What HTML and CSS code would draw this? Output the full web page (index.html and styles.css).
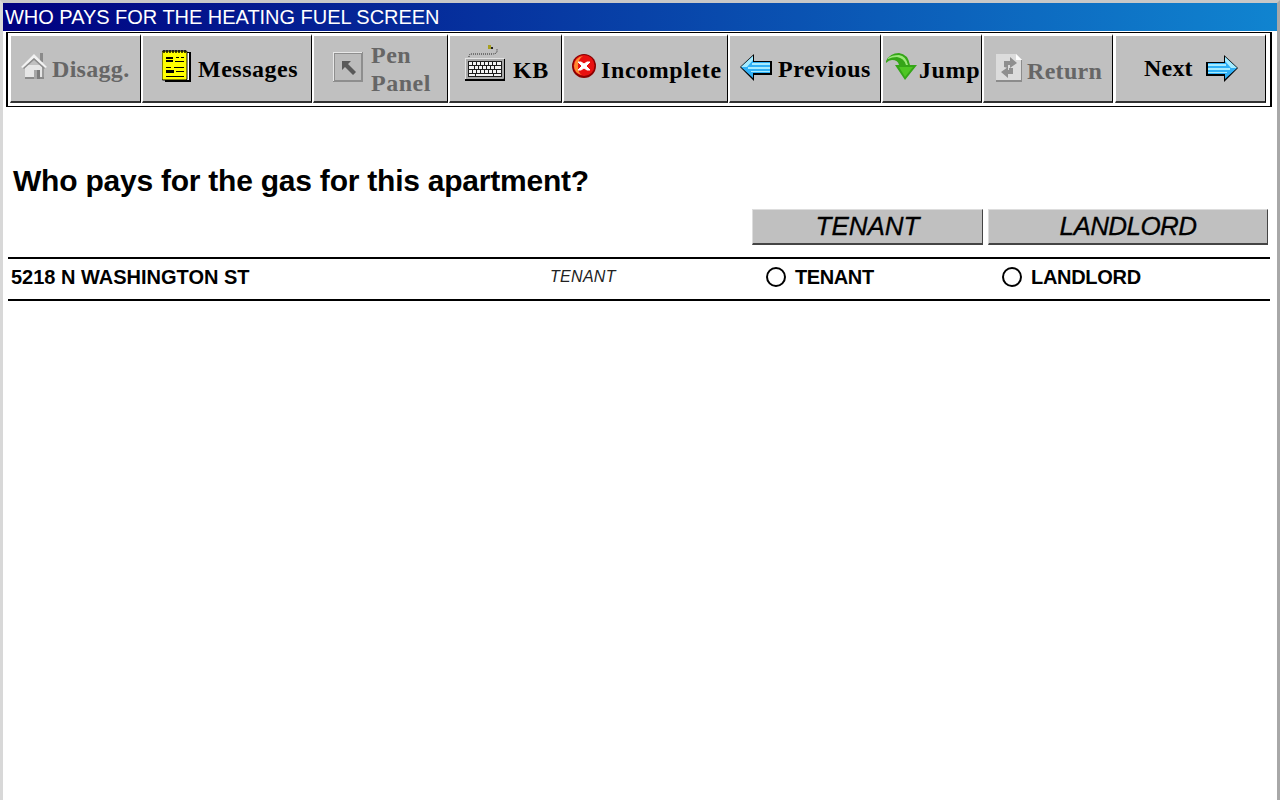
FILE: index.html
```html
<!DOCTYPE html>
<html lang="en">
<head>
<meta charset="utf-8">
<title>Who pays for the heating fuel screen</title>
<link rel="stylesheet" href="styles.css">
</head>
<body>
<div class="window">
  <header class="titlebar">WHO PAYS FOR THE HEATING FUEL SCREEN</header>
  <nav class="toolbar">
    <div class="btn b-disagg off">
      <svg class="ico" width="27" height="28" viewBox="0 0 27 28">
        <rect x="19" y="1" width="3" height="9" fill="#8a8a8a"/>
        <path d="M4 13h19v14H4z" fill="#e6e6e6"/>
        <path d="M21 13h2v14h-2z" fill="#9a9a9a"/>
        <path d="M4 25h19v2H4z" fill="#8a8a8a"/>
        <path d="M0 15 13 2l13 13-2 1L13 6 2 16z" fill="#f2f2f2"/>
        <path d="M2 16 13 6l11 10-1 1L13 8 3 17z" fill="#8c8c8c"/>
        <rect x="13" y="18" width="6" height="9" fill="#7c7c7c"/>
        <rect x="13" y="18" width="3" height="9" fill="#a6a6a6"/>
      </svg>
      <span>Disagg.</span>
    </div>
    <div class="btn b-msg">
      <svg class="ico" width="29" height="32" viewBox="0 0 29 32">
        <rect x="3" y="2" width="26" height="30" fill="#000"/>
        <rect x="25" y="3" width="2" height="27" fill="#fff"/>
        <rect x="0" y="1" width="25" height="29" rx="1" fill="#ffff00" stroke="#000"/>
        <path d="M2 0v3M5 0v3M8 0v3M11 0v3M14 0v3M17 0v3M20 0v3M23 0v3" stroke="#000" stroke-width="1.4"/>
        <path d="M4 7h7v2H4zM14 7h3v1h-3zM19 7h3v1h-3zM4 10h7v2H4zM13 11h9v1h-9zM4 17h5v1H4zM12 17h10v1H12zM4 20h8v3H4zM14 21h8v1H14zM4 26h18v1H4z" fill="#000"/>
      </svg>
      <span>Messages</span>
    </div>
    <div class="btn b-pen off">
      <svg class="ico" width="30" height="30" viewBox="0 0 30 30">
        <rect x="0" y="0" width="30" height="30" fill="#8e8e8e"/>
        <path d="M0 0h29v1H1v28H0z" fill="#e8e8e8"/>
        <rect x="2" y="2" width="26" height="26" fill="#bcbcbc"/>
        <path d="M9 9h9l-3 3 8 8-3 3-8-8-3 3z" fill="#595959"/>
      </svg>
      <span class="stack"><span>Pen</span><span>Panel</span></span>
    </div>
    <div class="btn b-kb">
      <svg class="ico" width="40" height="36" viewBox="0 0 40 36">
        <path d="M4 14v-3q0-2 3-2h20q5 0 5-3V4" fill="none" stroke="#222" stroke-dasharray="1 1"/>
        <rect x="23" y="0" width="3" height="4" fill="#a8a020"/>
        <rect x="26" y="2" width="2" height="2" fill="#222"/>
        <rect x="0" y="14" width="40" height="22" fill="#000"/>
        <rect x="0" y="13" width="39" height="21" rx="1" fill="#a8a8a8"/>
        <path d="M0 13h39v1H1v20H0z" fill="#e4e4e4"/>
        <rect x="3" y="16" width="34" height="16" fill="#1c1c1c"/>
        <path d="M4 17h3v3H4zM8 17h3v3H8zM12 17h3v3h-3zM16 17h3v3h-3zM20 17h3v3h-3zM24 17h3v3h-3zM28 17h3v3h-3zM32 17h4v3h-4zM4 21h5v3H4zM10 21h3v3h-3zM14 21h3v3h-3zM18 21h3v3h-3zM22 21h3v3h-3zM26 21h3v3h-3zM30 21h6v3h-6zM4 25h3v3H4zM8 25h3v3H8zM12 25h3v3h-3zM16 25h3v3h-3zM20 25h3v3h-3zM24 25h3v3h-3zM28 25h3v3h-3zM32 25h4v3h-4zM4 29h6v2H4zM11 29h17v2H11zM29 29h7v2h-7z" fill="#f2f2f2"/>
      </svg>
      <span>KB</span>
    </div>
    <div class="btn b-inc">
      <svg class="ico" width="24" height="24" viewBox="0 0 24 24">
        <circle cx="12" cy="12" r="12" fill="#8a0000"/>
        <circle cx="12" cy="11.5" r="10.5" fill="#e81010"/>
        <path d="M2 12a10 10 0 0 1 9-10q-5 3-5 10t4 9q-8-2-8-9z" fill="#ff8a30"/>
        <path d="M6 8h3l3 2 3-2h3l-4 4 4 4h-3l-3-2-3 2H6l4-4z" fill="#fff" stroke="#fff"/>
      </svg>
      <span>Incomplete</span>
    </div>
    <div class="btn b-prev">
      <svg class="ico" width="32" height="27" viewBox="0 0 32 27">
        <path d="M14 0 0 13l14 14v-6h18V7H14z" fill="#000"/>
        <path d="M13 2 1 13l12 11v-5h17V8H13z" fill="#2fb0f6"/>
        <path d="M13 2 1 13h6l6-7zM12 9h18v2H12zM8 13h22v2H8zM11 17h19v1H11z" fill="#a6ecff"/>
      </svg>
      <span>Previous</span>
    </div>
    <div class="btn b-jump">
      <svg class="ico" width="31" height="28" viewBox="0 0 31 28">
        <path d="M0 9Q4 1 13 1q9 1 11 12h7L19 28 9 13h4q-1-5-7-5-3 0-6 3z" fill="#35a518"/>
        <path d="M2 6q4-3 11-3 7 1 9 10h-2q-2-7-9-8-5 0-9 2z" fill="#9ce97a"/>
        <path d="M13 15h14l-8 10z" fill="#4fc624"/>
      </svg>
      <span>Jump</span>
    </div>
    <div class="btn b-ret off">
      <svg class="ico" width="26" height="29" viewBox="0 0 26 29">
        <path d="M0 1h20l6 6v22H0z" fill="#dcdcdc"/>
        <path d="M20 1l6 6h-6z" fill="#fff"/>
        <path d="M0 27h26v2H0zM25 7h1v22h-1z" fill="#8c8c8c"/>
        <path d="M8 14V8h6V4l7 6-7 5v-3h-2v3zM17 15v6h-5v4l-7-6 7-5v3h1v-2z" fill="#8f8f8f"/>
      </svg>
      <span>Return</span>
    </div>
    <div class="btn b-next">
      <span>Next</span>
      <svg class="ico" width="32" height="27" viewBox="0 0 32 27">
        <path d="M18 0 32 13 18 27v-6H0V7h18z" fill="#000"/>
        <path d="M19 2l12 11-12 11v-5H2V8h17z" fill="#2fb0f6"/>
        <path d="M19 2l12 11h-6l-6-7zM2 9h18v2H2zM2 13h22v2H2zM2 17h19v1H2z" fill="#a6ecff"/>
      </svg>
    </div>
  </nav>
  <main class="content">
    <h1 class="question">Who pays for the gas for this apartment?</h1>
    <div class="heads">
      <div class="head head-tenant">TENANT</div>
      <div class="head head-landlord">LANDLORD</div>
    </div>
    <div class="row">
      <div class="addr">5218 N WASHINGTON ST</div>
      <div class="prev">TENANT</div>
      <div class="opt opt-tenant"><span class="radio"></span>TENANT</div>
      <div class="opt opt-landlord"><span class="radio"></span>LANDLORD</div>
    </div>
  </main>
</div>
</body>
</html>
```
FILE: styles.css
```css
* { box-sizing: border-box; }
html, body { margin: 0; padding: 0; background: #fff; }
body { width: 1280px; height: 800px; overflow: hidden; }

.window {
  height: 800px;
  border-top: 3px solid #c8c8c8;
  border-left: 3px solid #d8d8d8;
  border-right: 3px solid #a8a8a8;
  background: #fff;
  font-family: "Liberation Sans", Arial, sans-serif;
  color: #000;
}
.titlebar {
  height: 28px;
  padding-left: 2px;
  background: linear-gradient(90deg, #000080, #1084d0);
  color: #fff;
  font-size: 20px;
  letter-spacing: -0.03px;
  line-height: 28px;
  white-space: nowrap;
}
.toolbar {
  display: flex;
  height: 75px;
  width: 1266px;
  margin: 1px 0 0 3px;
  padding: 1px 5px 3px 2px;
  border: 1px solid #000;
  border-left-width: 2px;
  border-right-width: 2px;
  background: #fff;
}
.btn {
  display: flex;
  align-items: flex-start;
  height: 69px;
  flex: none;
  background: #c0c0c0;
  border-top: 2px solid #fff;
  border-left: 1px solid #fff;
  border-right: 1px solid #000;
  border-bottom: 2px solid #333;
  margin-right: 1px;
  font-family: "Liberation Serif", "Times New Roman", serif;
  font-weight: bold;
  font-size: 24px;
  letter-spacing: 0.5px;
  line-height: 28px;
  white-space: nowrap;
}
.off { color: #666; }
.ico { flex: none; display: block; }

.b-disagg { width: 131px; padding-left: 10px; letter-spacing: 0.3px; }
.b-disagg .ico { margin: 16px 4px 0 0; }
.b-disagg span { margin-top: 19px; }

.b-msg { width: 170px; padding-left: 19px; }
.b-msg .ico { margin: 14px 7px 0 0; }
.b-msg span { margin-top: 19px; }

.b-pen { width: 135px; padding-left: 19px; }
.b-pen .ico { margin: 16px 8px 0 0; }
.stack { display: flex; flex-direction: column; margin-top: 5px; line-height: 28px; }

.b-kb { width: 113px; padding-left: 15px; }
.b-kb .ico { margin: 9px 8px 0 0; }
.b-kb span { margin-top: 20px; }

.b-inc { width: 165px; padding-left: 8px; letter-spacing: 0.6px; }
.b-inc .ico { margin: 18px 5px 0 0; }
.b-inc span { margin-top: 20px; }

.b-prev { width: 152px; padding-left: 10px; }
.b-prev .ico { margin: 18px 6px 0 0; }
.b-prev span { margin-top: 19px; }

.b-jump { width: 100px; padding-left: 3px; letter-spacing: 0.6px; }
.b-jump .ico { margin: 16px 2px 0 0; }
.b-jump span { margin-top: 20px; }

.b-ret { width: 130px; margin-right: 2px; padding-left: 12px; letter-spacing: 0.3px; }
.b-ret .ico { margin: 17px 5px 0 0; }
.b-ret span { margin-top: 21px; }

.b-next { width: 151px; padding-left: 28px; margin-right: 0; letter-spacing: 0.2px; }
.b-next .ico { margin: 19px 0 0 13px; }
.b-next span { margin-top: 18px; }

.content { padding: 0 0 0 5px; }
.question {
  margin: 0;
  padding: 56px 0 0 5px;
  font-size: 30px;
  font-weight: bold;
  letter-spacing: -0.23px;
  line-height: 36px;
  white-space: nowrap;
}
.heads {
  display: flex;
  gap: 5px;
  margin: 10px 0 12px 744px;
}
.head {
  height: 36px;
  background: #c0c0c0;
  border-top: 1px solid #ddd;
  border-left: 1px solid #ddd;
  border-right: 1px solid #444;
  border-bottom: 2px solid #444;
  font-size: 26px;
  font-style: italic;
  line-height: 33px;
  text-align: center;
  -webkit-text-stroke: 0.3px #000;
}
.head-tenant { width: 231px; }
.head-landlord { width: 280px; letter-spacing: -0.6px; }

.row {
  display: grid;
  grid-template-columns: 542px 216px 236px 1fr;
  align-items: center;
  width: 1262px;
  height: 44px;
  padding-bottom: 4px;
  border-top: 2px solid #000;
  border-bottom: 2px solid #000;
}
.addr { padding-left: 3px; font-size: 20px; font-weight: bold; }
.prev { font-size: 16px; font-style: italic; font-weight: normal; letter-spacing: 0.3px; color: #222; }
.opt { display: flex; align-items: center; font-size: 20px; font-weight: bold; }
.opt-tenant { letter-spacing: -0.4px; }
.opt-landlord { letter-spacing: -0.3px; }
.radio {
  width: 20px;
  height: 20px;
  margin-right: 9px;
  border: 2px solid #000;
  border-radius: 50%;
  background: #fff;
}
```
